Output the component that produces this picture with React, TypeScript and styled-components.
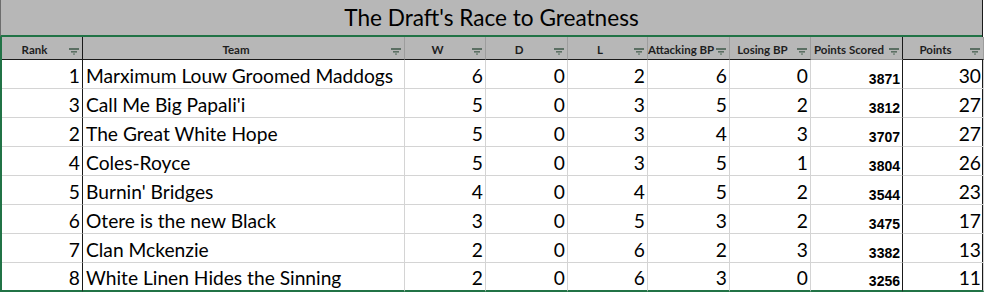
import styled, { createGlobalStyle } from "styled-components";

const GlobalStyle = createGlobalStyle`
  body {
    margin: 0;
    background: #ffffff;
  }
`;

const green = "#217346";

const Sheet = styled.div`
  width: 982px;
  border-right: 1px solid #1a1a1a;
  background: #ffffff;
`;

const Title = styled.div`
  height: 35px;
  background: #b7b7b7;
  border-left: 1px solid #6d6d6d;
  border-bottom: 2px solid ${green};
  display: flex;
  justify-content: center;
  align-items: center;
  font-family: Lato, "Liberation Sans", sans-serif;
  font-size: 22.6px;
  color: #000;
`;

const Grid = styled.div`
  display: grid;
  grid-template-columns: 81px 322px 81px 82px 80px 82px 81px 92px 81px;
  border-left: 2px solid ${green};
  width: 982px;
  box-sizing: border-box;
`;

const HeadCell = styled.div<{ $dark?: boolean; $soft?: boolean }>`
  height: 23px;
  box-sizing: border-box;
  background: #b7b7b7;
  border-right: 1px solid ${(p) => (p.$dark ? "#1a1a1a" : "#9d9d9d")};
  border-bottom: 1px solid ${(p) => (p.$soft ? "#9d9d9d" : "#1a1a1a")};
  display: flex;
  align-items: flex-end;
  padding: 0 3px 3px 0;
  font-family: Lato, "Liberation Sans", sans-serif;
  font-weight: bold;
  font-size: 11.5px;
  line-height: 12px;
  color: #1e1e1e;
  overflow: hidden;

  .label {
    flex: 1;
    text-align: center;
    white-space: nowrap;
  }
`;

const FilterIcon = styled.svg`
  flex: none;
  margin-left: 2px;
  margin-bottom: 1px;
`;

const Cell = styled.div<{ $dark?: boolean; $left?: boolean; $bold?: boolean; $last?: boolean }>`
  height: 29px;
  box-sizing: border-box;
  border-right: 1px solid ${(p) => (p.$dark ? "#1a1a1a" : "#d4d4d4")};
  border-bottom: ${(p) => (p.$last ? `2px solid ${green}` : "1px solid #d4d4d4")};
  display: flex;
  align-items: flex-end;
  justify-content: ${(p) => (p.$left ? "flex-start" : "flex-end")};
  padding: ${(p) => (p.$left ? "0 0 2px 3px" : "0 2px 2px 0")};
  font-family: ${(p) => (p.$bold ? '"Liberation Sans", Arial, sans-serif' : 'Lato, "Liberation Sans", sans-serif')};
  font-weight: ${(p) => (p.$bold ? "bold" : "normal")};
  font-size: ${(p) => (p.$bold ? "14px" : "19.2px")};
  line-height: ${(p) => (p.$bold ? "14px" : "20px")};
  color: #000;
  white-space: nowrap;
  overflow: hidden;
`;

const Filter = () => (
  <FilterIcon width="10" height="7" viewBox="0 0 10 7">
    <rect x="0" y="0" width="10" height="2" fill="#5b6f63" />
    <rect x="2" y="3" width="6" height="1.6" fill="#5b6f63" />
    <rect x="4" y="5.2" width="2" height="1.8" fill="#7d8d83" />
  </FilterIcon>
);

const headers = ["Rank", "Team", "W", "D", "L", "Attacking BP", "Losing BP", "Points Scored", "Points"];

const rows: [number, string, number, number, number, number, number, number, number][] = [
  [1, "Marximum Louw Groomed Maddogs", 6, 0, 2, 6, 0, 3871, 30],
  [3, "Call Me Big Papali'i", 5, 0, 3, 5, 2, 3812, 27],
  [2, "The Great White Hope", 5, 0, 3, 4, 3, 3707, 27],
  [4, "Coles-Royce", 5, 0, 3, 5, 1, 3804, 26],
  [5, "Burnin' Bridges", 4, 0, 4, 5, 2, 3544, 23],
  [6, "Otere is the new Black", 3, 0, 5, 3, 2, 3475, 17],
  [7, "Clan Mckenzie", 2, 0, 6, 2, 3, 3382, 13],
  [8, "White Linen Hides the Sinning", 2, 0, 6, 3, 0, 3256, 11],
];

// columns whose right edge is a dark rule
const darkCols = [0, 7];

const App = () => {
  return (
    <>
      <GlobalStyle />
      <Sheet>
        <Title>The Draft's Race to Greatness</Title>
        <Grid>
          {headers.map((h, i) => (
            <HeadCell key={h} $dark={darkCols.includes(i)} $soft={i === 7}>
              <span className="label">{h}</span>
              <Filter />
            </HeadCell>
          ))}
          {rows.map((row, r) =>
            row.map((v, c) => (
              <Cell
                key={`${r}-${c}`}
                $dark={darkCols.includes(c)}
                $left={c === 1}
                $bold={c === 7}
                $last={r === rows.length - 1}
              >
                {v}
              </Cell>
            ))
          )}
        </Grid>
      </Sheet>
    </>
  );
};

export default App;
